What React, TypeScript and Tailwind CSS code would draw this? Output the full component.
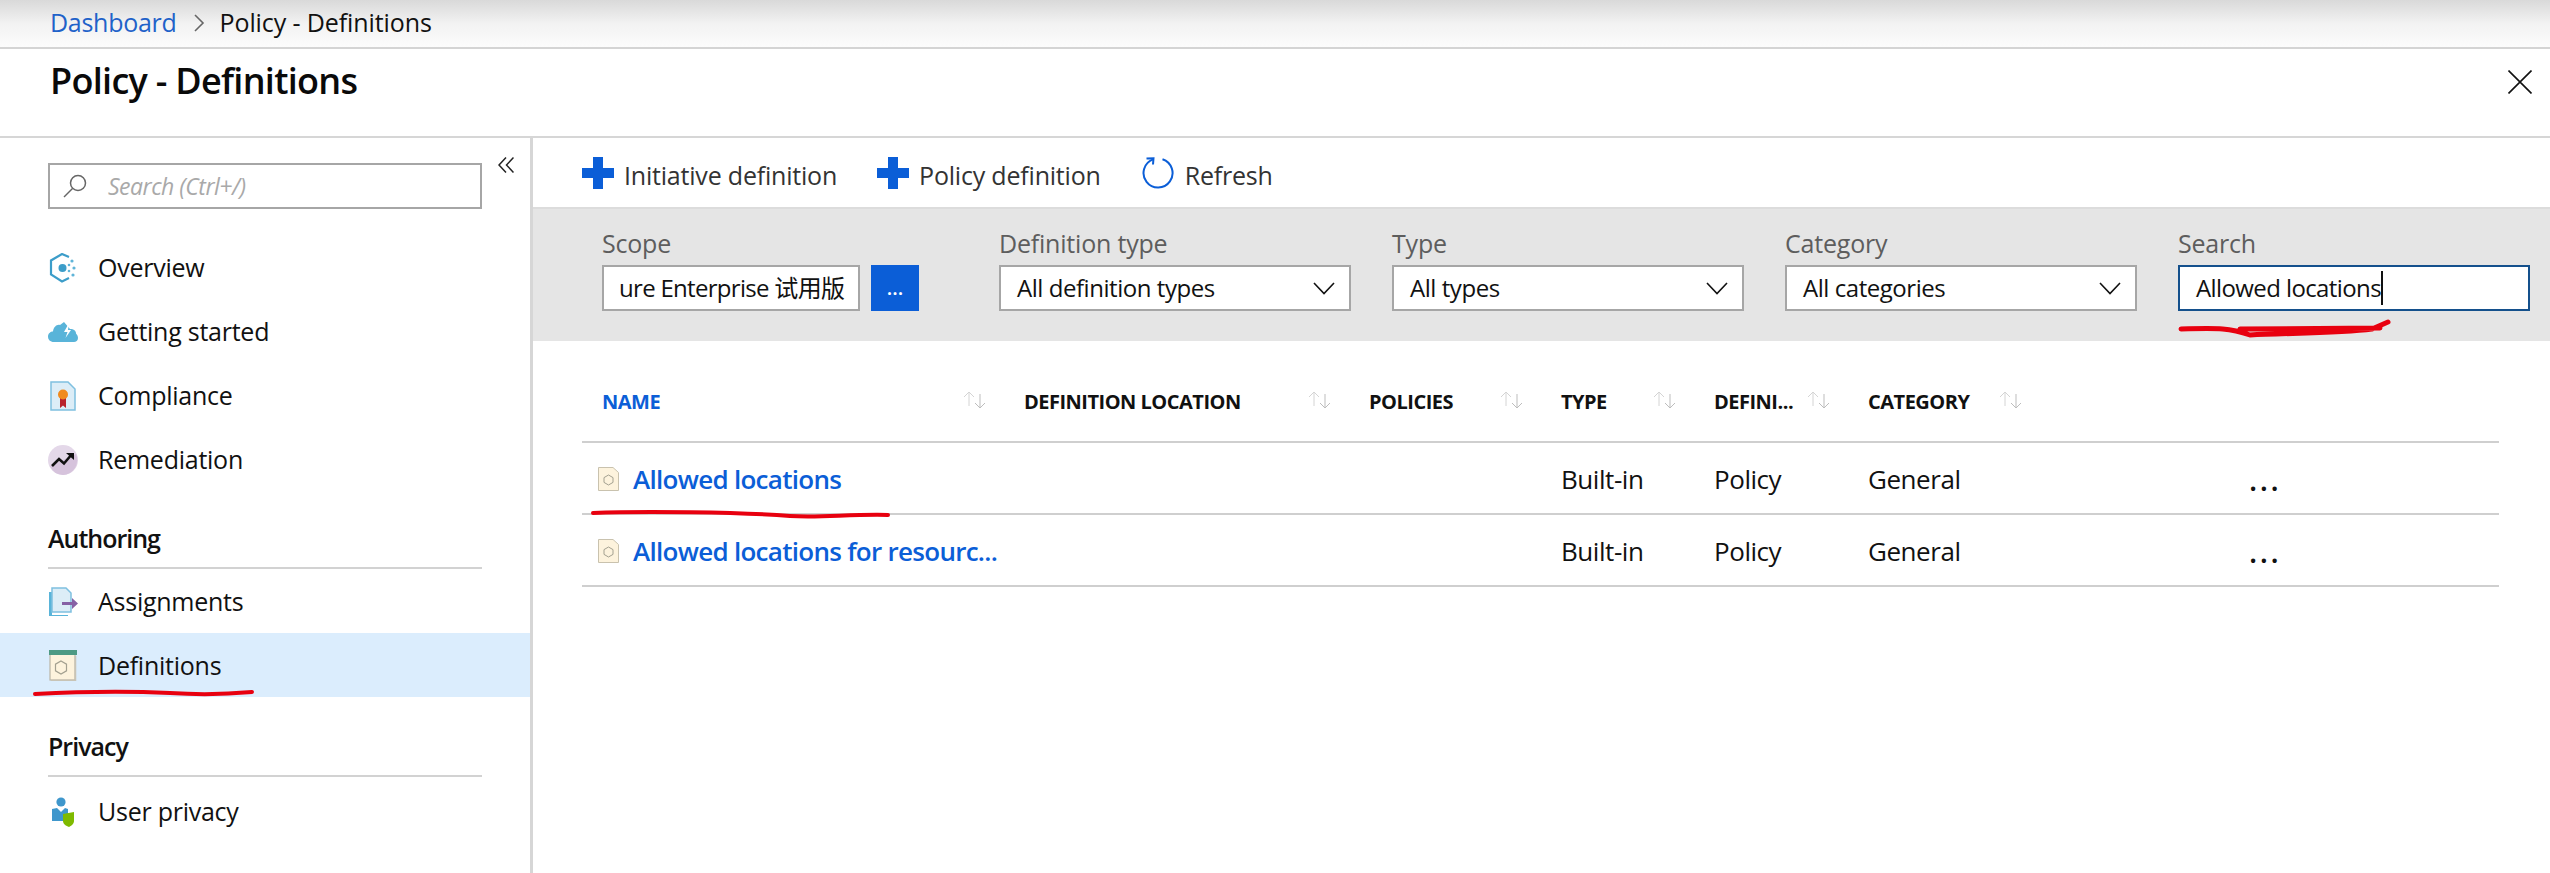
const sans = "font-['Open_Sans','Noto_Sans_CJK_SC',sans-serif]";

const OverviewIcon = () => (
  <svg width="28" height="30" viewBox="0 0 28 30">
    <path d="M20 4 L13 1 L2 7.5 V21.5 L13 28.5 L20 25" fill="none" stroke="#3c9dc9" strokeWidth="2.2" />
    <circle cx="13.5" cy="15" r="4" fill="#3c9dc9" />
    <circle cx="23" cy="8" r="1.6" fill="#5fb4d8" />
    <circle cx="20" cy="12" r="1.3" fill="#5fb4d8" />
    <circle cx="25" cy="15" r="1.6" fill="#5fb4d8" />
    <circle cx="20" cy="18" r="1.3" fill="#5fb4d8" />
    <circle cx="24" cy="22" r="1.6" fill="#5fb4d8" />
  </svg>
);

const CloudIcon = () => (
  <svg width="30" height="20" viewBox="0 0 30 20">
    <path d="M6 20 C2 20 0 17.5 0 14.5 C0 11.5 2.5 9.5 5 9.5 C5.5 5 9 2 12 3 L16 0 L22 7 C26 7 28 9 28 11.5 C29.5 13 30 14.5 30 16 C30 18.5 28 20 26 20 Z" fill="#59b4d9" />
    <path d="M21 1 L16 10 H19.5 L17.5 16 L23 8 H20 Z" fill="#fff" />
  </svg>
);

const ComplianceIcon = () => (
  <svg width="26" height="30" viewBox="0 0 26 30">
    <path d="M1 1 H18 L25 8 V29 H1 Z" fill="#dcedf7" stroke="#7fc0e0" strokeWidth="1.5" />
    <path d="M10 16 V27 L13 24.5 L16 27 V16 Z" fill="#b8222c" />
    <circle cx="13" cy="13.5" r="5" fill="#f08a1d" />
  </svg>
);

const RemediationIcon = () => (
  <svg width="30" height="30" viewBox="0 0 30 30">
    <circle cx="15" cy="15" r="15" fill="#e4d8e9" />
    <path d="M2 21 L28 9 A15 15 0 0 1 15 30 A15 15 0 0 1 2 21 Z" fill="#d6c3dc" />
    <path d="M4 21 L11 14 L16 18.5 L24 9" fill="none" stroke="#111" strokeWidth="2.6" />
    <path d="M18 8 H26 V15 Z" fill="#111" />
  </svg>
);

const AssignmentsIcon = () => (
  <svg width="30" height="30" viewBox="0 0 30 30">
    <path d="M1 5 H4 V28 H20 V29 H1 Z" fill="#59b4d9" />
    <path d="M4 1 H18 L23 6 V25 H4 Z" fill="#dcedf7" stroke="#7fc0e0" strokeWidth="1.5" />
    <path d="M14 15 H24 V11 L30 16.5 L24 22 V18 H14 Z" fill="#8661a5" />
  </svg>
);

const DefinitionsIcon = () => (
  <svg width="30" height="31" viewBox="0 0 30 31">
    <rect x="2" y="3" width="25" height="27" fill="#fdf3dd" stroke="#b9b5a6" strokeWidth="1.2" />
    <path d="M27.5 6 V30.5 H3" fill="none" stroke="#c8c4b6" strokeWidth="1.5" />
    <rect x="1" y="0" width="28" height="5" fill="#4d9a84" />
    <path d="M13 11 L18.5 14.2 V20.8 L13 24 L7.5 20.8 V14.2 Z" fill="none" stroke="#a3a090" strokeWidth="1.2" />
  </svg>
);

const PrivacyIcon = () => (
  <svg width="24" height="30" viewBox="0 0 24 30">
    <circle cx="10" cy="5" r="4.6" fill="#3f97cc" />
    <path d="M1 12 L6 11 L10 15 L14 11 L17 12 V24 H1 Z" fill="#3f97cc" />
    <path d="M12 17 L23 15 V24 C23 27 20 29 18 30 C15 29 12 27 12 24 Z" fill="#7fba00" />
  </svg>
);

const RowIcon = () => (
  <svg width="21" height="24" viewBox="0 0 21 24" className="shrink-0">
    <path d="M0.5 0.5 H15 L20.5 5.5 V23.5 H0.5 Z" fill="#fdf3dd" stroke="#c9c2ae" strokeWidth="1" />
    <path d="M10.5 8 L15 10.6 V15.4 L10.5 18 L6 15.4 V10.6 Z" fill="none" stroke="#a3a090" strokeWidth="1" />
  </svg>
);

const PlusIcon = () => (
  <svg width="32" height="32" viewBox="0 0 32 32" className="shrink-0">
    <path d="M11 0 H21 V11 H32 V21 H21 V32 H11 V21 H0 V11 H11 Z" fill="#0b5ed7" />
  </svg>
);

const RefreshIcon = () => (
  <svg width="32" height="32" viewBox="0 0 32 32" className="shrink-0" fill="none" stroke="#0b5ed7" strokeWidth="2">
    <path d="M20.5 2.2 A14.5 14.5 0 1 1 11 2.4" />
    <path d="M4.5 1.5 L11.5 1.2 L11 7.5" />
  </svg>
);

const Chevron = () => (
  <svg width="22" height="13" viewBox="0 0 22 13" fill="none" stroke="#111" strokeWidth="1.6">
    <path d="M1 1 L11 11.5 L21 1" />
  </svg>
);

const SortArrows = () => (
  <svg width="23" height="18" viewBox="0 0 23 18" fill="none" strokeWidth="1" className="-mt-1 shrink-0">
    <g stroke="#d4d4d4">
      <path d="M6 15 V1 M1 6 L6 1 L11 6" />
    </g>
    <g stroke="#bdbdbd">
      <path d="M17 3 V17 M12 12 L17 17 L22 12" />
    </g>
  </svg>
);

const NavRow = ({ icon, label, active }: any) => (
  <div className={`flex h-[64px] items-center pt-[1px] ${active ? "bg-[#dbedfd]" : ""}`}>
    <div className="flex w-[98px] shrink-0 pl-[48px]">
      <div className="flex w-[30px] justify-center">{icon}</div>
    </div>
    <span className="text-[25px] tracking-[-0.25px] text-[#111]">{label}</span>
  </div>
);

const SectionHead = ({ label, height }: any) => (
  <div className={`mx-[48px] flex items-end border-b-2 border-[#d2d2d2] pb-[11px] ${height}`}>
    <span className="text-[25px] leading-[36px] font-semibold tracking-[-1px] text-[#111]">{label}</span>
  </div>
);

const FilterLabel = ({ children }: any) => (
  <div className="mb-[8px] h-[27px] text-[25px] leading-[27px] tracking-[-0.2px] text-[#5d5d5d]">{children}</div>
);

const Select = ({ label, value }: any) => (
  <div className="w-[352px]">
    <FilterLabel>{label}</FilterLabel>
    <div className="flex h-[46px] items-center justify-between border-2 border-[#a6a6a6] bg-white pr-[14px] pl-[16px]">
      <span className="text-[24px] tracking-[-0.45px] text-[#111]">{value}</span>
      <Chevron />
    </div>
  </div>
);

const columns = "grid grid-cols-[442px_345px_192px_153px_154px_192px_1fr]";

const headers = [
  { label: "NAME", className: "pl-[20px] text-[#0b5ed7]" },
  { label: "DEFINITION LOCATION", className: "text-[#111]" },
  { label: "POLICIES", className: "text-[#111]" },
  { label: "TYPE", className: "text-[#111]" },
  { label: "DEFINI...", className: "text-[#111]" },
  { label: "CATEGORY", className: "text-[#111]" },
];

const rows = ["Allowed locations", "Allowed locations for resourc..."];

export default function App() {
  return (
    <div className={`relative flex h-[873px] w-[2550px] flex-col overflow-hidden bg-white ${sans}`}>
      <div className="flex h-[49px] items-center border-b-2 border-[#d4d4d4] bg-gradient-to-b from-[#d9d9d9] via-[#f2f2f2] to-[#fcfcfc] pb-[2px] pl-[50px] text-[25px] tracking-[-0.28px]">
        <span className="text-[#1f62c9]">Dashboard</span>
        <svg width="12" height="18" viewBox="0 0 12 18" fill="none" stroke="#666" strokeWidth="1.6" className="mr-[15px] ml-[16px]">
          <path d="M2 1 L10 9 L2 17" />
        </svg>
        <span className="tracking-[-0.1px] text-[#111]">Policy - Definitions</span>
      </div>

      <div className="flex h-[89px] items-center justify-between border-b-2 border-[#d6d6d6] pr-[18px] pl-[50px]">
        <span className="-mt-[24px] text-[36px] font-semibold tracking-[-0.7px] text-[#0a0a0a]">Policy - Definitions</span>
        <svg width="24" height="24" viewBox="0 0 24 24" stroke="#111" strokeWidth="1.6" className="-mt-[22px]">
          <path d="M0.5 0.5 L23.5 23.5 M23.5 0.5 L0.5 23.5" />
        </svg>
      </div>

      <div className="flex min-h-0 flex-1">
        <aside className="relative w-[533px] shrink-0 border-r-3 border-[#d6d6d6]">
          <div className="pt-[25px] pl-[48px]">
            <div className="flex h-[46px] w-[434px] items-center border-2 border-[#a6a6a6] pl-[12px]">
              <svg width="26" height="26" viewBox="0 0 26 26" fill="none" stroke="#666" strokeWidth="1.5" className="mr-[20px]">
                <circle cx="16" cy="10" r="7.5" />
                <path d="M10.5 15.5 L2 24" />
              </svg>
              <span className="text-[23px] tracking-[-0.5px] text-[#a9a9a9] italic">Search (Ctrl+/)</span>
            </div>
          </div>
          <svg width="16" height="16" viewBox="0 0 16 16" fill="none" stroke="#222" strokeWidth="1.5" className="absolute top-[19px] left-[498px]">
            <path d="M8 0.5 L1 8 L8 15.5 M15.5 0.5 L8.5 8 L15.5 15.5" />
          </svg>
          <div className="mt-[26px]">
            <NavRow icon={<OverviewIcon />} label="Overview" />
            <NavRow icon={<CloudIcon />} label="Getting started" />
            <NavRow icon={<ComplianceIcon />} label="Compliance" />
            <NavRow icon={<RemediationIcon />} label="Remediation" />
            <SectionHead label="Authoring" height="h-[78px]" />
            <NavRow icon={<AssignmentsIcon />} label="Assignments" />
            <NavRow icon={<DefinitionsIcon />} label="Definitions" active />
            <SectionHead label="Privacy" height="h-[80px]" />
            <div className="mt-[2px]">
              <NavRow icon={<PrivacyIcon />} label="User privacy" />
            </div>
          </div>
        </aside>

        <main className="min-w-0 flex-1">
          <div className="flex h-[71px] items-center border-b-2 border-[#dcdcdc] pl-[49px] text-[25px] tracking-[-0.2px] text-[#333]">
            <PlusIcon />
            <span className="mt-[6px] mr-[40px] ml-[10px]">Initiative definition</span>
            <PlusIcon />
            <span className="mt-[6px] mr-[41px] ml-[10px]">Policy definition</span>
            <RefreshIcon />
            <span className="mt-[6px] ml-[11px]">Refresh</span>
          </div>

          <div className="flex h-[132px] gap-[41px] bg-[#e5e5e5] pt-[21px] pl-[69px]">
            <div className="mr-[39px] w-[317px]">
              <FilterLabel>Scope</FilterLabel>
              <div className="flex gap-[11px]">
                <div className="flex h-[46px] w-[258px] items-center overflow-hidden border-2 border-[#a6a6a6] bg-white pl-[15px]">
                  <span className="text-[24px] whitespace-nowrap tracking-[-0.7px] text-[#111]">ure Enterprise 试用版</span>
                </div>
                <div className="flex h-[46px] w-[48px] items-center justify-center bg-[#0b5ed7] text-[20px] font-semibold text-white">...</div>
              </div>
            </div>
            <Select label="Definition type" value="All definition types" />
            <Select label="Type" value="All types" />
            <Select label="Category" value="All categories" />
            <div className="w-[352px]">
              <FilterLabel>Search</FilterLabel>
              <div className="flex h-[46px] items-center border-2 border-[#14508c] bg-white pl-[16px]">
                <span className="text-[24px] tracking-[-0.6px] text-[#111]">Allowed locations</span>
                <span className="h-[34px] w-[2px] bg-[#111]" />
              </div>
            </div>
          </div>

          <div className="mr-[51px] ml-[49px]">
            <div className={`${columns} h-[102px] items-center border-b-2 border-[#cfcfcf] pt-[22px]`}>
              {headers.map((header) => (
                <div key={header.label} className={`flex items-center justify-between pr-[38px] text-[20px] font-bold tracking-[-0.5px] whitespace-nowrap ${header.className}`}>
                  <span>{header.label}</span>
                  <SortArrows />
                </div>
              ))}
            </div>
            {rows.map((row) => (
              <div key={row} className={`${columns} h-[72px] items-center border-b-2 border-[#cfcfcf] pt-[2px] text-[26px] font-medium tracking-[-0.45px] text-[#111]`}>
                <div className="flex items-center gap-[14px] pl-[16px] font-semibold tracking-[-0.72px] text-[#0b5ed7]">
                  <RowIcon />
                  <span className="whitespace-nowrap">{row}</span>
                </div>
                <div />
                <div />
                <div>Built-in</div>
                <div>Policy</div>
                <div>General</div>
                <div className="pt-[2px] pl-[189px] text-[30px] leading-none font-semibold tracking-[2.5px]">...</div>
              </div>
            ))}
          </div>
        </main>
      </div>

      {/* hand drawn red annotations */}
      <svg width="2550" height="873" className="pointer-events-none absolute inset-0" fill="none" stroke="#e8000f" strokeLinecap="round">
        <path d="M35 694 C90 691 130 691 170 693 C200 695 230 694 252 692" strokeWidth="4" />
        <path d="M593 513 C640 511 740 512 790 516 C820 518 850 514 888 515" strokeWidth="4" />
        <path d="M2181 329 C2220 328 2230 328 2250 335 C2290 333 2340 333 2372 329 L2388 322 M2240 329 L2380 328" strokeWidth="5" />
      </svg>
    </div>
  );
}
